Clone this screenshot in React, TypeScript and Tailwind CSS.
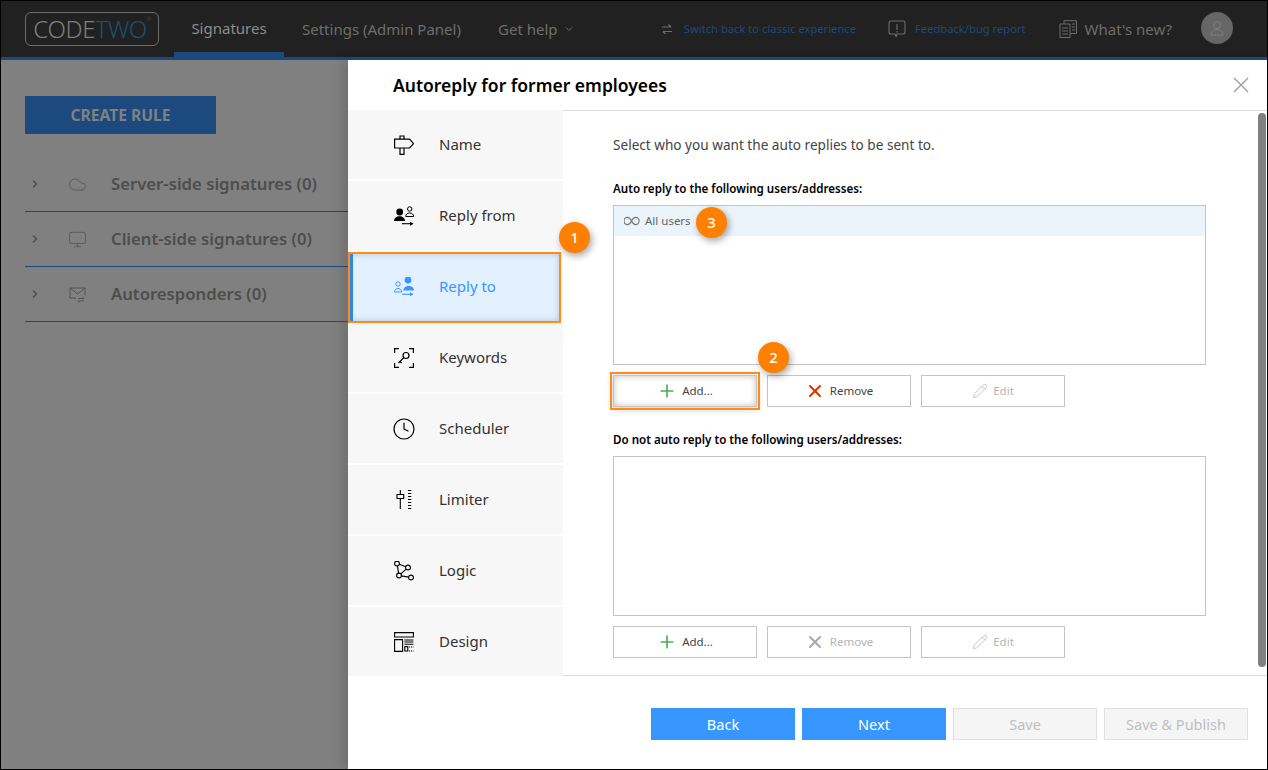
import { ReactNode } from 'react';
import { ChevronDown, ChevronRight, Clock, Cloud, Monitor, Pencil, Plus, X } from 'lucide-react';

const SignpostIcon = () => (
  <svg viewBox="0 0 20 20" className="w-5 h-5" fill="none" stroke="currentColor" strokeWidth="1.2">
    <path d="M.6 4.200h15l4 4.400-4 4.400H.6z" />
    <path d="M6 4.200V1h4v3.200M6 13v6.400h4V13" />
  </svg>
);

const ReplyFromIcon = () => (
  <svg viewBox="0 0 20 20" className="w-5 h-5" fill="currentColor">
    <circle cx="5.700" cy="6" r="3.400" />
    <path d="M0 15c0-3 2.500-4.800 5.500-4.800S11 12 11 15z" />
    <circle cx="15.700" cy="3" r="2.200" fill="none" stroke="currentColor" strokeWidth="1" />
    <path d="M11.700 10.500c0-2.200 1.800-3.500 4-3.500s4 1.300 4 3.500z" fill="none" stroke="currentColor" strokeWidth="1" />
    <path d="M8 17.700h9" stroke="currentColor" strokeWidth="1.100" />
    <path d="M16 15.700l3.600 2-3.600 2z" />
  </svg>
);

const ReplyToIcon = () => (
  <svg viewBox="0 0 20 20" className="w-5 h-5" fill="currentColor">
    <circle cx="14" cy="3" r="3.400" />
    <path d="M9.400 13.500c0-3 2.300-4.500 5.300-4.500s5.300 1.500 5.300 4.500z" />
    <circle cx="4" cy="7" r="2.200" fill="none" stroke="currentColor" strokeWidth="1" />
    <path d="M.5 15c0-2.200 1.500-3.500 3.500-3.500s3.500 1.300 3.500 3.500z" fill="none" stroke="currentColor" strokeWidth="1" />
    <path d="M8 17.300h9" stroke="currentColor" strokeWidth="1.100" />
    <path d="M16 15.300l3.600 2-3.600 2z" />
  </svg>
);

const KeywordsIcon = () => (
  <svg viewBox="0 0 20 20" className="w-5 h-5" fill="none" stroke="currentColor" strokeWidth="1.200">
    <path d="M.6 5V.6H5M15 .6h4.400V5M19.400 15v4.400H15M5 19.400H.6V15" />
    <circle cx="12" cy="7.500" r="3" />
    <path d="M9.800 9.700l-5.300 5.300M6 13.500l1.500 1.500" />
  </svg>
);

const LimiterIcon = () => (
  <svg viewBox="0 0 20 20" className="w-5 h-5" fill="none" stroke="currentColor" strokeWidth="1.100">
    <path d="M6.300 0v4.500M6.300 8.500V19M3 4.500h6.700v4H3z" />
    <path d="M14 .5h3.300M14 3.500h3.300M14 6.500h3.300M14 9.500h3.300M14 12.500h3.300M14 15.500h3.300M14 18.500h3.300" />
  </svg>
);

const LogicIcon = () => (
  <svg viewBox="0 0 20 20" className="w-5 h-5" fill="none" stroke="currentColor" strokeWidth="1.100">
    <circle cx="3" cy="2.500" r="2.400" />
    <circle cx="14" cy="6.500" r="2.400" />
    <circle cx="5" cy="14.500" r="2.400" />
    <circle cx="17" cy="16.500" r="2.400" />
    <path d="M5.300 3.300l6.400 2.400M3.400 4.900l1.200 7.200M12.200 8.100l-5.400 4.800M7.400 14.900l7.200 1.200" />
  </svg>
);

const DesignIcon = () => (
  <svg viewBox="0 0 20 20" className="w-5 h-5" fill="none" stroke="currentColor" strokeWidth="1.100">
    <path d="M.6.600h18.800v4.400H.6zM.6 7.600h8v11.800h-8z" />
    <path d="M10.400 8h9M10.400 10h9M10.400 12.200h9" />
    <path d="M10.800 14.600h3v4.400h-3z" />
    <path d="M15 15h4.500M15 19h4.500" strokeDasharray="1.200 .8" />
  </svg>
);

const LinkedIcon = () => (
  <svg viewBox="0 0 18 10" className="w-4 h-[10px]" fill="none" stroke="#777" strokeWidth="1.300">
    <path d="M8.500 5C7 2 5.800 1 4 1a4 4 0 000 8c1.800 0 3-1 4.500-4zm0 0c1.500-3 2.700-4 4.500-4a4 4 0 010 8c-1.800 0-3-1-4.500-4z" />
  </svg>
);

const Badge = ({ n, className }: { n: number; className: string }) => (
  <div
    className={`absolute z-20 w-[31px] h-[31px] rounded-full bg-[#ff8000] text-white text-[15px] font-medium flex items-center justify-center shadow-[2px_3px_7px_rgba(0,0,0,0.35)] ${className}`}
  >
    {n}
  </div>
);

const steps: { label: string; icon: ReactNode }[] = [
  { label: 'Name', icon: <SignpostIcon /> },
  { label: 'Reply from', icon: <ReplyFromIcon /> },
  { label: 'Reply to', icon: <ReplyToIcon /> },
  { label: 'Keywords', icon: <KeywordsIcon /> },
  { label: 'Scheduler', icon: <Clock className="w-6 h-6 -m-0.5" strokeWidth={1.200} /> },
  { label: 'Limiter', icon: <LimiterIcon /> },
  { label: 'Logic', icon: <LogicIcon /> },
  { label: 'Design', icon: <DesignIcon /> },
];

const ruleGroups = [
  { label: 'Server-side signatures (0)', icon: <Cloud className="w-[19px] h-[19px] -m-px" strokeWidth={1} /> },
  { label: 'Client-side signatures (0)', icon: <Monitor className="w-[19px] h-[19px] -m-px" strokeWidth={1} /> },
  {
    label: 'Autoresponders (0)',
    icon: (
      <svg viewBox="0 0 17 16" className="w-[17px] h-[17px]" fill="none" stroke="currentColor" strokeWidth="1">
        <path d="M7 11.500H1V1.500h15V9M1 1.500l7.500 6 7.500-6" />
        <path d="M9 12h6l-1.500-1.500M15 14.500H9l1.500 1.500" />
      </svg>
    ),
  },
];

const ActionButton = ({ icon, label, dim, focused }: { icon: ReactNode; label: string; dim?: boolean; focused?: boolean }) => (
  <div
    className={`w-36 h-8 flex items-center justify-center gap-[5px] border border-[#c4c4c4] text-[11.500px] bg-white ${
      dim ? 'text-[#b5b5b5]' : 'text-[#444]'
    } ${focused ? 'border-[#a8a8a8] outline-2 outline-offset-1 outline-[#ff8c1a] shadow-[inset_0_0_6px_rgba(0,0,0,0.25),0_2px_8px_rgba(0,0,0,0.2)]' : ''}`}
  >
    {icon}
    <span>{label}</span>
  </div>
);

const FooterButton = ({ label, primary }: { label: string; primary?: boolean }) => (
  <div
    className={`w-36 h-8 flex items-center justify-center pt-px text-[14.500px] ${
      primary ? 'bg-[#3897ff] text-white' : 'bg-[#f5f5f5] border border-[#e0e0e0] text-[#c0c0c0]'
    }`}
  >
    {label}
  </div>
);

const AddressBox = ({ children }: { children?: ReactNode }) => (
  <div className="w-[593px] h-40 border border-[#c4c4c4] mt-2">{children}</div>
);

const AddIcon = <Plus className="w-5 h-5 text-[#4caf50]" strokeWidth={2} />;
const EditIcon = <Pencil className="w-4 h-4" strokeWidth={1.200} />;

export default function App() {
  return (
    <div
      className="h-screen w-full flex flex-col overflow-hidden border-t border-x border-b border-black bg-[#808080] font-['Noto_Sans',sans-serif]"
    >
      <header className="h-[59px] shrink-0 flex bg-[#212121] border-b-[3px] border-[#1c4a7e] text-[#6d6d6d] text-[15px]">
        <div className="ml-6 mt-[11px] w-[134px] h-[34px] border border-[#6b6b6b] rounded-md flex items-center justify-center text-[24px] font-light tracking-[-0.3px] leading-none">
          <span className="text-[#7d7d7d]">CODE</span>
          <span className="text-[#1c5070]">TWO</span>
          <span className="self-start mt-[4px] text-[5px] text-[#555]">®</span>
        </div>
        <div className="ml-[15px] w-[110px] h-[59px] border-b-[8px] border-[#1c4a7e] flex items-center justify-center pt-[3px] text-[#8d8d8d]">
          Signatures
        </div>
        <div className="ml-[18px] flex items-center w-[196px]">Settings (Admin Panel)</div>
        <div className="flex items-center gap-[5px]">
          Get help
          <ChevronDown className="w-3 h-3" />
        </div>
        <div className="ml-auto flex items-center">
          <svg viewBox="0 0 12 12" className="w-3 h-3" fill="none" stroke="#6d6d6d" strokeWidth="1.200">
            <path d="M1 4h9M7.500 1.500L10 4M11 8.500H2M4.500 11L2 8.500" />
          </svg>
          <span className="ml-[11px] text-[11.200px] text-[#1c4a7e]">Switch back to classic experience</span>
          <svg viewBox="0 0 18 18" className="ml-8 w-[18px] h-[18px]" fill="none" stroke="#6d6d6d" strokeWidth="1.100">
            <path d="M3 1h12a2 2 0 012 2v9a2 2 0 01-2 2H9l-1 2.500-1-2.500H3a2 2 0 01-2-2V3a2 2 0 012-2zM9 4v6M9 11v1.500" />
          </svg>
          <span className="ml-[9px] text-[11.200px] text-[#1c4a7e]">Feedback/bug report</span>
          <svg viewBox="0 0 18 18" className="ml-[33px] w-[18px] h-[18px]" fill="none" stroke="#6d6d6d" strokeWidth="1">
            <path d="M1 4h10v13.500H1zM5 4V.7h12.500v12.800H11M3 8h6M3 11h6M3 14h6M13 4h3M13 7h3M13 10h3" />
          </svg>
          <span className="ml-2">What&apos;s new?</span>
          <div className="ml-[29px] mr-[34px] w-8 h-8 -mt-[2px] rounded-full bg-[#666] flex items-center justify-center">
            <svg viewBox="0 0 16 16" className="w-4 h-4" fill="none" stroke="#808080" strokeWidth="1">
              <circle cx="8" cy="5" r="3.500" />
              <path d="M2 15c0-3.500 2.500-5.500 6-5.500s6 2 6 5.500z" />
            </svg>
          </div>
        </div>
      </header>

      <div className="flex-1 flex min-h-0">
        <aside className="w-[347px] shrink-0 pl-6 pt-9">
          <div className="w-[191px] h-[38px] pt-px bg-[#1c4a7e] text-[#808080] text-[15.600px] font-bold flex items-center justify-center">
            CREATE RULE
          </div>
          <div className="mt-[23px]">
            {ruleGroups.map((group) => (
              <div key={group.label} className="h-[55px] flex items-center border-b border-[#1c4a7e] text-[#4d4d4d]">
                <ChevronRight className="ml-[4px] w-3 h-3" strokeWidth={3} />
                <div className="ml-[28px] text-[#555]">{group.icon}</div>
                <span className="ml-[25px] text-[16.700px] font-semibold">{group.label}</span>
              </div>
            ))}
          </div>
        </aside>

        <div className="flex-1 flex flex-col bg-white shadow-[-6px_0_10px_rgba(0,0,0,0.12)] z-10">
          <div className="h-[50px] shrink-0 flex items-center justify-between pl-[45px] pr-[18px]">
            <h1 className="pt-px text-[17.500px] font-semibold text-black">Autoreply for former employees</h1>
            <svg viewBox="0 0 16 16" className="w-4 h-4" fill="none" stroke="#999" strokeWidth="1.300">
              <path d="M1 1l14 14M15 1L1 15" />
            </svg>
          </div>

          <div className="flex h-[566px] shrink-0">
            <nav className="w-[215px] shrink-0 flex flex-col gap-[2px]">
              {steps.map((step) => {
                const active = step.label === 'Reply to';
                return (
                  <div
                    key={step.label}
                    className={`relative h-[69px] shrink-0 flex items-center pl-[46px] gap-[25px] bg-[#f7f7f7] text-[15px] ${
                      active ? 'text-[#3897ff]' : 'text-[#333]'
                    }`}
                  >
                    {active && (
                      <>
                        <div className="absolute left-0 top-0 w-[213px] h-[71px] bg-[#e3f0ff] border-2 border-[#ff8c1a] shadow-[inset_0_0_6px_rgba(0,0,0,0.2)]">
                          <div className="w-[3px] h-full bg-[#2f86e8]" />
                        </div>
                        <Badge n={1} className="left-[211px] -top-[30px]" />
                      </>
                    )}
                    <span className={`relative ${active ? 'text-[#3897ff]' : 'text-black'}`}>{step.icon}</span>
                    <span className="relative">{step.label}</span>
                  </div>
                );
              })}
            </nav>

            <section className="flex-1 flex border-y border-[#dedede]">
              <div className="flex-1 pl-[50px] pt-[25px]">
                <p className="text-[13.600px] leading-[18px] text-[#444]">Select who you want the auto replies to be sent to.</p>
                <h2 className="mt-[27px] text-[11.600px] leading-4 font-semibold text-black">
                  Auto reply to the following users/addresses:
                </h2>
                <AddressBox>
                  <div className="relative h-[30px] bg-[#ebf3fb] flex items-center pl-[10px] gap-[5px] text-[11.500px] text-[#666]">
                    <LinkedIcon />
                    All users
                    <Badge n={3} className="left-[82px] top-[1px]" />
                  </div>
                </AddressBox>
                <div className="mt-[10px] flex gap-[10px]">
                  <div className="relative">
                    <ActionButton focused label="Add..." icon={AddIcon} />
                    <Badge n={2} className="left-[145px] -top-[33px]" />
                  </div>
                  <ActionButton label="Remove" icon={<X className="w-5 h-5 text-[#d83b01]" strokeWidth={2.500} />} />
                  <ActionButton dim label="Edit" icon={EditIcon} />
                </div>
                <h2 className="mt-[25px] text-[11.600px] leading-4 font-semibold text-black">
                  Do not auto reply to the following users/addresses:
                </h2>
                <AddressBox />
                <div className="mt-[10px] flex gap-[10px]">
                  <ActionButton label="Add..." icon={AddIcon} />
                  <ActionButton dim label="Remove" icon={<X className="w-5 h-5 text-[#aaa]" strokeWidth={2.500} />} />
                  <ActionButton dim label="Edit" icon={EditIcon} />
                </div>
              </div>
              <div className="w-2 mt-[2px] mb-2 mr-px bg-[#808080] rounded-full" />
            </section>
          </div>

          <footer className="flex-1 flex justify-end gap-[7px] pt-8 pr-[19px]">
            <FooterButton primary label="Back" />
            <FooterButton primary label="Next" />
            <FooterButton label="Save" />
            <FooterButton label="Save & Publish" />
          </footer>
        </div>
      </div>
    </div>
  );
}
